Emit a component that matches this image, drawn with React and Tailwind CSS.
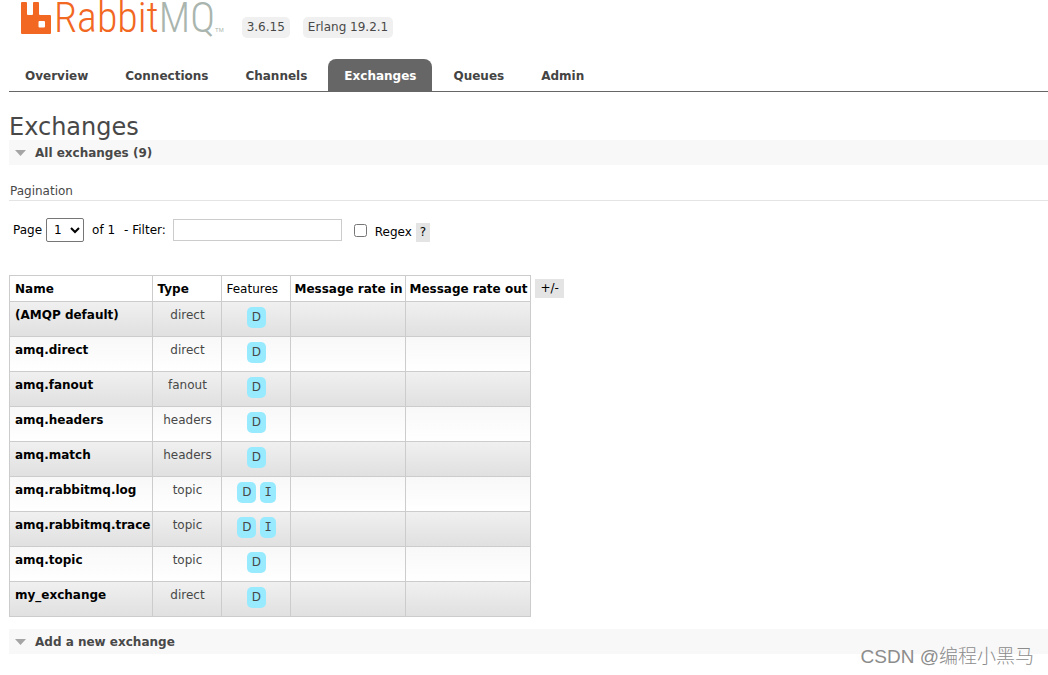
import { useState } from 'react';

const TABS = ['Overview', 'Connections', 'Channels', 'Exchanges', 'Queues', 'Admin'];

const EXCHANGES = [
  { name: '(AMQP default)', type: 'direct', features: ['D'] },
  { name: 'amq.direct', type: 'direct', features: ['D'] },
  { name: 'amq.fanout', type: 'fanout', features: ['D'] },
  { name: 'amq.headers', type: 'headers', features: ['D'] },
  { name: 'amq.match', type: 'headers', features: ['D'] },
  { name: 'amq.rabbitmq.log', type: 'topic', features: ['D', 'I'] },
  { name: 'amq.rabbitmq.trace', type: 'topic', features: ['D', 'I'] },
  { name: 'amq.topic', type: 'topic', features: ['D'] },
  { name: 'my_exchange', type: 'direct', features: ['D'] },
];

function Logo() {
  return (
    <a href="#/" className="flex items-start" aria-label="RabbitMQ">
      <svg className="h-[34px] w-[30px]" viewBox="0 0 30 34" fill="#f26722">
        <path
          fillRule="evenodd"
          d="M1 2h4q1 0 1 1v11q0 1 1 1h4q1 0 1-1v-11q0-1 1-1h4q1 0 1 1v11q0 1 1 1h10q1 0 1 1v17q0 1-1 1h-28q-1 0-1-1v-30q0-1 1-1zM18.500 21q-1 0-1 1v4.500q0 1 1 1h4.500q1 0 1-1v-4.500q0-1-1-1z"
        />
      </svg>
      <span className="ml-[3px] font-['Roboto_Condensed',sans-serif] text-[42px] leading-9 text-[#f26722] font-light">
        Rabbit<span className="text-[#a9b5ae]">MQ</span>
      </span>
      <span className="mt-[26px] font-['Liberation_Sans',sans-serif] text-[6px] leading-2 text-[#a9b5ae]">TM</span>
    </a>
  );
}

function SectionHeading({ children, open, onToggle }) {
  return (
    <h2 className="bg-[#f8f8f8]">
      <button
        onClick={onToggle}
        aria-expanded={open}
        className="flex h-[25px] w-full items-center gap-[9px] pl-[6px] text-left font-bold"
      >
        <svg className="h-[6px] w-[11px]" viewBox="0 0 11 6" fill="#a5a5a5">
          <path d="M0 0h11L5.500 6z" />
        </svg>
        {children}
      </button>
    </h2>
  );
}

function Feature({ label }) {
  // monospace gives the capital I its bars
  if (label === 'I') {
    return (
      <abbr title="Internal" className="rounded-[5px] bg-[#98ebff] px-1 font-['DejaVu_Sans_Mono',monospace] leading-[21px] no-underline">
        I
      </abbr>
    );
  }
  return (
    <abbr title="Durable" className="rounded-[5px] bg-[#98ebff] px-[5px] leading-[21px] no-underline">
      {label}
    </abbr>
  );
}

export default function App() {
  const [tab, setTab] = useState('Exchanges');
  const [page, setPage] = useState('1');
  const [filter, setFilter] = useState('');
  const [regex, setRegex] = useState(false);
  const [listOpen, setListOpen] = useState(true);
  const [addOpen, setAddOpen] = useState(false);

  const rows = EXCHANGES.filter((x) => x.name.includes(filter));

  return (
    <div className="relative min-h-screen bg-white pl-[9px] font-['DejaVu_Sans',Verdana,sans-serif] text-xs leading-4 text-[#484848]">
      <header>
        <div className="flex h-[59px] items-start pl-3">
          <Logo />
          <div className="mt-[17px] ml-[18px] flex gap-[13px]">
            <span className="rounded-[5px] bg-[#f0f0f0] px-[5px] leading-[21px]">3.6.15</span>
            <span className="rounded-[5px] bg-[#f0f0f0] px-[5px] leading-[21px]">Erlang 19.2.1</span>
          </div>
        </div>
        <nav className="flex gap-[5px] border-b border-[#666]">
          {TABS.map((name) => (
            <a
              key={name}
              href={`#/${name.toLowerCase()}`}
              onClick={() => setTab(name)}
              className={`rounded-t-lg px-4 pt-[9px] pb-[7px] font-bold ${
                tab === name ? 'bg-[#666] text-white' : 'text-[#444]'
              }`}
            >
              {name}
            </a>
          ))}
        </nav>
      </header>

      <main>
        <h1 className="h-12 pt-[21px] text-2xl leading-7">Exchanges</h1>

        <SectionHeading open={listOpen} onToggle={() => setListOpen(!listOpen)}>
          All exchanges (9)
        </SectionHeading>

        {listOpen && (
          <div className="pb-3">
            <h3 className="border-b border-[#e4e4e4] pt-[18px] pb-px pl-px">Pagination</h3>

            <div className="mt-[17px] flex h-6 items-center pl-1 text-black">
              <label htmlFor="page">Page</label>
              <select
                id="page"
                value={page}
                onChange={(e) => setPage(e.target.value)}
                className="ml-1 h-6 w-[38px] rounded-[2px] border border-[#767676] bg-white pl-[3px]"
              >
                <option value="1">1</option>
              </select>
              <span className="ml-2">of 1</span>
              <label htmlFor="filter" className="ml-[9px]">- Filter:</label>
              <input
                id="filter"
                type="text"
                value={filter}
                onChange={(e) => setFilter(e.target.value)}
                className="ml-[7px] h-[22px] w-[169px] border border-[#ccc] px-1"
              />
              <input
                id="regex"
                type="checkbox"
                checked={regex}
                onChange={(e) => setRegex(e.target.checked)}
                className="ml-3 h-[13px] w-[13px]"
              />
              <label htmlFor="regex" className="ml-2 pt-1">Regex</label>
              <button className="mt-1 ml-1 bg-[#e4e4e4] px-1 leading-[19px]">?</button>
            </div>

            <div className="mt-[33px] flex items-start gap-1">
              <table className="border-collapse">
                <thead>
                  <tr className="h-[26px] text-left text-black">
                    <th className="w-[143px] border border-[#ccc] pl-[5px]">
                      <button className="font-bold">Name</button>
                    </th>
                    <th className="w-[69px] border border-[#ccc] px-1">
                      <button className="font-bold">Type</button>
                    </th>
                    <th className="w-[69px] border border-[#ccc] px-1 font-normal">Features</th>
                    <th className="w-[115px] border border-[#ccc] pr-[2px] pl-[3px] whitespace-nowrap">
                      <button className="font-bold">Message rate in</button>
                    </th>
                    <th className="w-[125px] border border-[#ccc] px-[3px] whitespace-nowrap">
                      <button className="font-bold">Message rate out</button>
                    </th>
                  </tr>
                </thead>
                <tbody>
                  {rows.map((x) => (
                    <tr
                      key={x.name}
                      className="h-[35px] align-top odd:bg-linear-to-b odd:from-[#f0f0f0] odd:to-[#e0e0e0] even:bg-linear-to-b even:from-[#f8f8f8] even:to-white"
                    >
                      <td className="border border-[#ccc] pt-[5px] pr-[2px] pl-[5px] whitespace-nowrap">
                        <a href={`#/exchanges/${x.name}`} className="font-bold text-black">{x.name}</a>
                      </td>
                      <td className="border border-[#ccc] px-1 pt-[5px] text-center">{x.type}</td>
                      <td className="border border-[#ccc] px-1 pt-[5px]">
                        <div className="flex justify-center gap-1">
                          {x.features.map((f) => (
                            <Feature key={f} label={f} />
                          ))}
                        </div>
                      </td>
                      <td className="border border-[#ccc]"></td>
                      <td className="border border-[#ccc]"></td>
                    </tr>
                  ))}
                </tbody>
              </table>
              <button className="mt-1 bg-[#e4e4e4] px-[5px] leading-[19px] text-black">+/-</button>
            </div>
          </div>
        )}

        <SectionHeading open={addOpen} onToggle={() => setAddOpen(!addOpen)}>
          Add a new exchange
        </SectionHeading>
      </main>

      <div className="absolute right-[14px] bottom-1 font-['Liberation_Sans','Noto_Sans_CJK_SC',sans-serif] text-[19px] leading-7 font-light text-[#8c8c8c]">
        CSDN @编程小黑马
      </div>
    </div>
  );
}
